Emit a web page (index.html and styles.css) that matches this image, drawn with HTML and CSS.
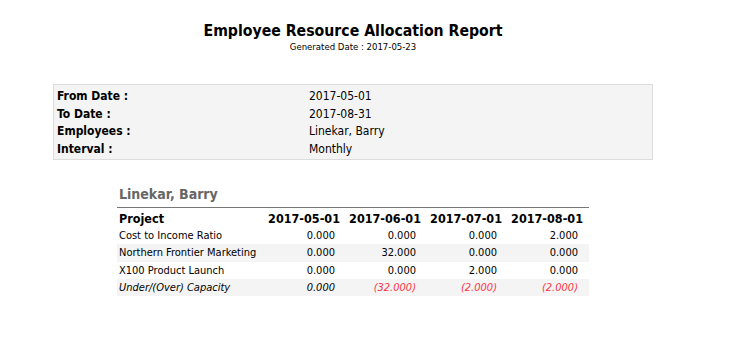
FILE: index.html
```html
<!DOCTYPE html>
<html>
<head>
<meta charset="utf-8">
<link rel="stylesheet" href="styles.css">
</head>
<body>
<div class="page">
  <header class="report-head">
    <h1 class="title">Employee Resource Allocation Report</h1>
    <div class="generated">Generated Date : 2017-05-23</div>
  </header>

  <table class="params">
    <tr><th>From Date :</th><td>2017-05-01</td></tr>
    <tr><th>To Date :</th><td>2017-08-31</td></tr>
    <tr><th>Employees :</th><td>Linekar, Barry</td></tr>
    <tr><th>Interval :</th><td>Monthly</td></tr>
  </table>

  <section class="employee">
    <h2 class="emp-name">Linekar, Barry</h2>
    <table class="alloc">
      <thead>
        <tr><th class="proj">Project</th><th>2017-05-01</th><th>2017-06-01</th><th>2017-07-01</th><th>2017-08-01</th></tr>
      </thead>
      <tbody>
        <tr><td class="proj">Cost to Income Ratio</td><td>0.000</td><td>0.000</td><td>0.000</td><td>2.000</td></tr>
        <tr class="alt"><td class="proj">Northern Frontier Marketing</td><td>0.000</td><td>32.000</td><td>0.000</td><td>0.000</td></tr>
        <tr><td class="proj">X100 Product Launch</td><td>0.000</td><td>0.000</td><td>2.000</td><td>0.000</td></tr>
        <tr class="alt total"><td class="proj">Under/(Over) Capacity</td><td>0.000</td><td class="neg">(32.000)</td><td class="neg">(2.000)</td><td class="neg">(2.000)</td></tr>
      </tbody>
    </table>
  </section>
</div>
</body>
</html>
```

FILE: styles.css
```css
html, body {
  margin: 0;
  padding: 0;
  background: #ffffff;
}
body {
  font-family: "DejaVu Sans Condensed", "DejaVu Sans", sans-serif;
  color: #000;
}
.page {
  width: 690px;
  margin-left: 8px;
  padding-top: 20px;
}
.report-head {
  text-align: center;
}
.title {
  margin: 0;
  font-size: 15.7px;
  line-height: 21px;
  font-weight: bold;
}
.generated {
  font-size: 9.5px;
  line-height: 12px;
}
.params {
  margin: 31px auto 0;
  width: 600px;
  border: 1px solid #dcdcdc;
  background: #f4f4f4;
  border-collapse: separate;
  border-spacing: 0;
  padding: 2.5px 0 1.5px;
  font-size: 12px;
}
.params th {
  text-align: left;
  font-weight: bold;
  width: 252px;
  padding: 0 0 0 3px;
  height: 17.5px;
  color: #000;
}
.params td {
  padding: 0;
  height: 17.5px;
  color: #000;
}
.employee {
  width: 472px;
  margin: 25px auto 0;
}
.emp-name {
  margin: 0 0 4px 2px;
  font-size: 14px;
  line-height: 18px;
  color: #666;
  font-weight: bold;
}
.alloc {
  width: 472px;
  table-layout: fixed;
  border-collapse: collapse;
  border-top: 1px solid #777;
  font-size: 11px;
}
.alloc th {
  font-size: 12.5px;
  font-weight: bold;
  text-align: right;
  height: 17px;
  padding: 2px 6px 0 0;
  white-space: nowrap;
  width: 75px;
}
.alloc th.proj {
  text-align: left;
  padding-left: 2px;
  width: auto;
}
.alloc td {
  text-align: right;
  height: 17.3px;
  padding: 0 11px 0 0;
  white-space: nowrap;
}
.alloc td.proj {
  text-align: left;
  padding-left: 2px;
}
.alloc tr.alt td {
  background: #f4f4f4;
}
.alloc tr.total td {
  font-style: italic;
}
.alloc td.neg {
  color: #ff3344;
}
```
